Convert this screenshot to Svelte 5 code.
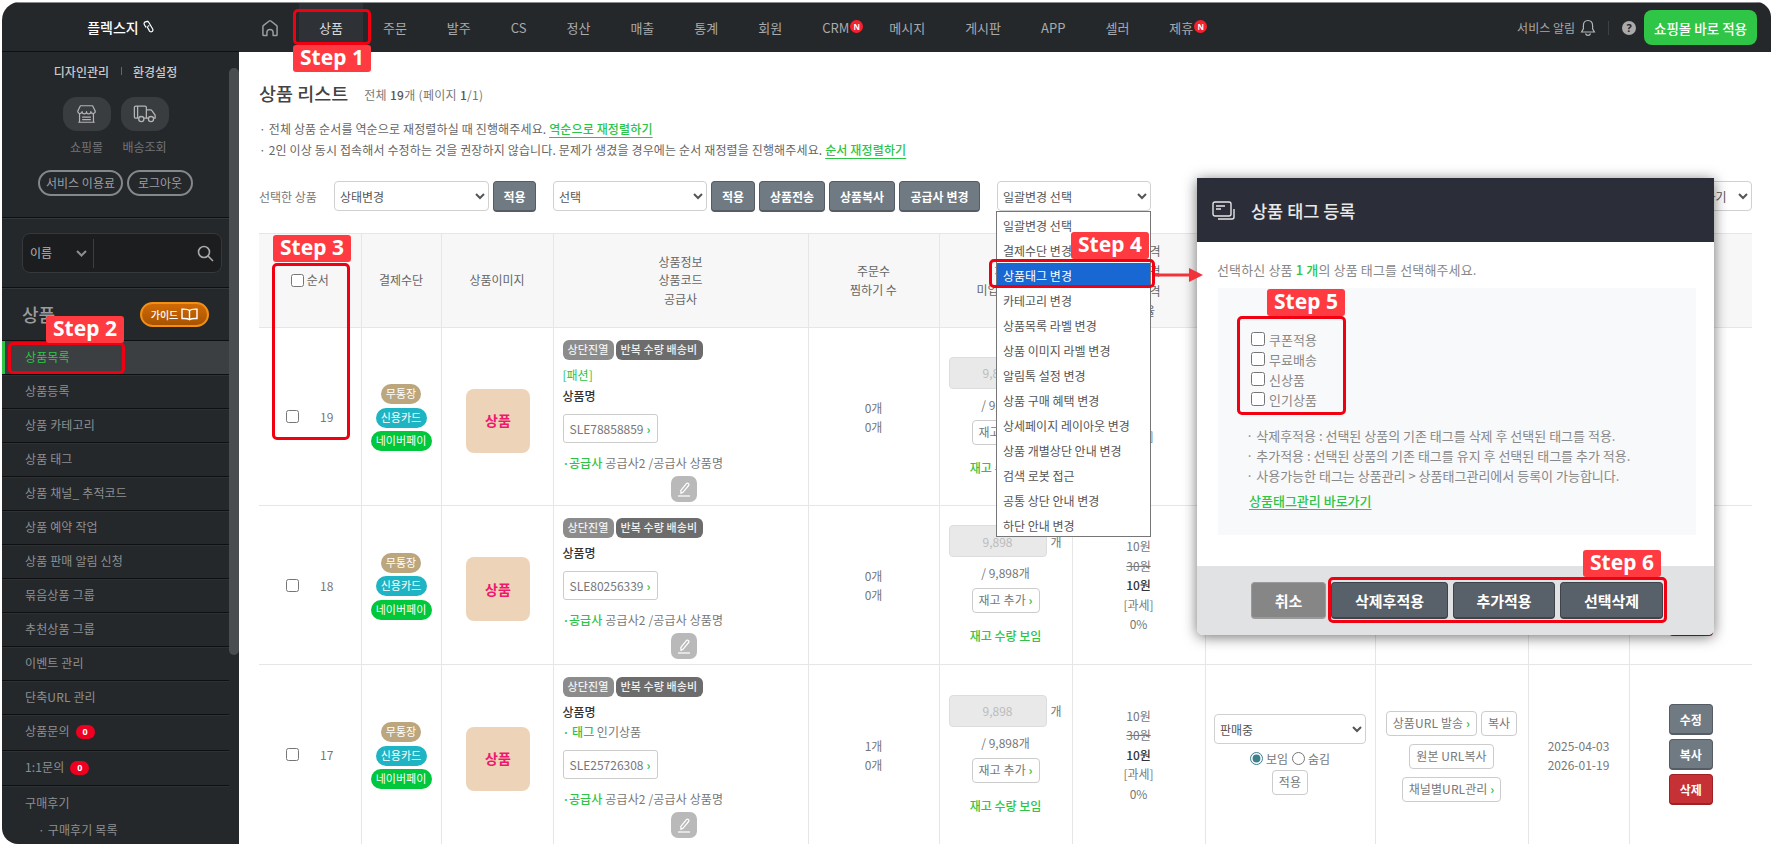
<script>
  const nav = [
    { t: '상품', active: true }, { t: '주문' }, { t: '발주' }, { t: 'CS' }, { t: '정산' }, { t: '매출' }, { t: '통계' },
    { t: '회원' }, { t: 'CRM', n: true }, { t: '메시지' }, { t: '게시판' }, { t: 'APP' }, { t: '셀러' }, { t: '제휴', n: true }
  ];
  const menu = [
    { t: '상품목록', active: true }, { t: '상품등록' }, { t: '상품 카테고리' }, { t: '상품 태그' }, { t: '상품 채널_ 추적코드' },
    { t: '상품 예약 작업' }, { t: '상품 판매 알림 신청' }, { t: '묶음상품 그룹' }, { t: '추천상품 그룹' }, { t: '이벤트 관리' },
    { t: '단축URL 관리' }, { t: '상품문의', badge: '0', tall: true }, { t: '1:1문의', badge: '0', tall: true }
  ];
  const rows = [
    { no: 19, h: 'r1', sku: 'SLE78858859', cat: '[패션]', orders: '0개', gap: 'g1' },
    { no: 18, h: 'r2', sku: 'SLE80256339', orders: '0개' },
    { no: 17, h: 'r3', sku: 'SLE25726308', tag: '인기상품', orders: '1개' }
  ];
  const drop = ['일괄변경 선택', '결제수단 변경', '상품태그 변경', '카테고리 변경', '상품목록 라벨 변경', '상품 이미지 라벨 변경', '알림톡 설정 변경', '상품 구매 혜택 변경', '상세페이지 레이아웃 변경', '상품 개별상단 안내 변경', '검색 로봇 접근', '공통 상단 안내 변경', '하단 안내 변경'];
  const tags = ['쿠폰적용', '무료배송', '신상품', '인기상품'];
  const steps = [1, 2, 3, 4, 5, 6];
</script>

<div class="root">
  <div class="frame">
    <header class="top">
      <div class="logo">
        <span>플렉스지</span>
        <svg width="11" height="14" viewBox="0 0 11 14" fill="none" stroke="#fff" stroke-width="1.2"><path d="M5.200 1.400 2.300 1.900a1.800 1.800 0 0 0-1 2.600l1.700 3"/><path d="M3.200 1.600a1.800 1.800 0 0 1 2.500.6l4 6.800a1.900 1.900 0 0 1-.7 2.600 1.900 1.900 0 0 1-2.600-.7L3.900 6.300"/><path d="M6.300 5.500 5 6.300"/></svg>
      </div>
      <svg class="home" width="20" height="20" viewBox="0 0 24 24" fill="none" stroke="#9a9c9e" stroke-width="1.8" stroke-linejoin="round"><path d="M3.500 20V10.500a2 2 0 0 1 .8-1.600L11 3.600a1.600 1.600 0 0 1 2 0l6.700 5.300a2 2 0 0 1 .8 1.600V20a1 1 0 0 1-1 1h-3.800v-3.500a3.700 3.700 0 0 0-7.400 0V21H4.500a1 1 0 0 1-1-1z"/></svg>
      <nav class="nav">
        {#each nav as n}
          <span class="nav-item" class:active={n.active}>{n.t}{#if n.n}<i class="n">N</i>{/if}</span>
        {/each}
      </nav>
      <div class="top-right">
        <span class="alarm">서비스 알림</span>
        <svg width="16" height="18" viewBox="0 0 16 18" fill="none" stroke="#b5b5b5" stroke-width="1.2"><path d="M8 1.500c-3 0-4.600 2.200-4.600 5v3.300L1.600 13h12.800l-1.800-3.200V6.500c0-2.800-1.600-5-4.600-5z"/><path d="M5.500 14.500a2.600 2.600 0 0 0 5 0"/></svg>
        <i class="vr"></i>
        <span class="q">?</span>
        <button class="go">쇼핑몰 바로 적용</button>
      </div>
    </header>

    <div class="body">
      <aside class="side">
        <div class="side-in">
          <section class="sec-a">
            <div class="links"><b>디자인관리</b><i></i><b>환경설정</b></div>
            <div class="quick">
              <div class="q-col">
                <span class="q-ico">
                  <svg width="21" height="20" viewBox="0 0 24 23" fill="none" stroke="#b3b3b3" stroke-width="1.4" stroke-linejoin="round"><path d="M5 2h14l3 6a2.500 2.500 0 0 1-5 .8 2.500 2.500 0 0 1-5 0 2.500 2.500 0 0 1-5 0 2.500 2.500 0 0 1-5-.8z"/><path d="M4 11v10h16V11M7 15h10M7 18h10M2.500 21h19"/></svg>
                </span>
                <em>쇼핑몰</em>
              </div>
              <div class="q-col">
                <span class="q-ico">
                  <svg width="24" height="18" viewBox="0 0 26 19" fill="none" stroke="#b3b3b3" stroke-width="1.4" stroke-linejoin="round"><path d="M6 14H3a1.500 1.500 0 0 1-1.500-1.500v-10A1.500 1.500 0 0 1 3 1h10a1.500 1.500 0 0 1 1.500 1.500V14H12M5 1v13"/><path d="M14.500 5h4.500a2 2 0 0 1 1.700 1l3 4.500a2 2 0 0 1 .3 1V14h-2M17 14h-2.500"/><circle cx="9" cy="15" r="2.800"/><circle cx="19.500" cy="15" r="2.800"/></svg>
                </span>
                <em>배송조회</em>
              </div>
            </div>
            <div class="pills"><span class="p1">서비스 이용료</span><span class="p2">로그아웃</span></div>
          </section>
          <section class="sec-b">
            <div class="search">
              <span class="s-name">이름</span>
              <svg class="s-chev" width="11" height="7" viewBox="0 0 11 7" fill="none" stroke="#8e8e8e" stroke-width="2"><path d="M1 1l4.500 4.500L10 1"/></svg>
              <i class="s-div"></i>
              <svg class="s-mag" width="17" height="17" viewBox="0 0 17 17" fill="none" stroke="#a9a9a9" stroke-width="1.600"><circle cx="7" cy="7" r="5.500"/><path d="M11 11l5 5"/></svg>
            </div>
          </section>
          <section class="sec-c">
            <h2>상품</h2>
            <span class="guide">가이드
              <svg width="17" height="13" viewBox="0 0 17 13" fill="none" stroke="#fff" stroke-width="1.400"><path d="M8.500 2.500C7 1.200 4.500 1 1 1.200v9.300c3.500-.2 6 0 7.500 1.200 1.500-1.200 4-1.400 7.500-1.200V1.200C12.500 1 10 1.200 8.500 2.500zM8.500 2.500v9.200"/></svg>
            </span>
          </section>
          <ul class="menu">
            {#each menu as m}
              <li class:active={m.active} class:tall={m.tall}>{m.t}{#if m.badge}<i class="cnt">{m.badge}</i>{/if}</li>
            {/each}
            <li class="last"><span>구매후기</span><small>· 구매후기 목록</small></li>
          </ul>
        </div>
        <div class="track"><i></i></div>
      </aside>

      <main class="main">
        <div class="title"><h1>상품 리스트</h1><span>전체 <b>19</b>개 (페이지 <b>1</b>/1)</span></div>
        <p class="note">· 전체 상품 순서를 역순으로 재정렬하실 때 진행해주세요. <a href="#a">역순으로 재정렬하기</a></p>
        <p class="note">· 2인 이상 동시 접속해서 수정하는 것을 권장하지 않습니다. 문제가 생겼을 경우에는 순서 재정렬을 진행해주세요. <a href="#a">순서 재정렬하기</a></p>

        <div class="tools">
          <span class="tl">선택한 상품</span>
          <select class="sel s155"><option>상태변경</option></select>
          <button class="gbtn w43">적용</button>
          <select class="sel s154 ml"><option>선택</option></select>
          <button class="gbtn w44">적용</button>
          <button class="gbtn w66">상품전송</button>
          <button class="gbtn w66">상품복사</button>
          <button class="gbtn w81">공급사 변경</button>
          <select class="sel s154 ml"><option>일괄변경 선택</option></select>
          <select class="sel s155 end"><option>엑셀 파일 다운로드 하기</option></select>
        </div>

        <table class="tbl">
          <colgroup>
            <col class="c1" /><col class="c2" /><col class="c3" /><col class="c4" /><col class="c5" /><col class="c6" /><col class="c6" /><col class="c8" /><col class="c9" /><col class="c10" /><col class="c11" />
          </colgroup>
          <thead>
            <tr>
              <th><label class="th-no"><input type="checkbox" />순서</label></th>
              <th>결제수단</th>
              <th>상품이미지</th>
              <th>상품정보<br />상품코드<br />공급사</th>
              <th>주문수<br />찜하기 수</th>
              <th>재고<br />미입금 재고</th>
              <th class="lh20">판매가격<br />정상가격<br />할인가격<br />과세율</th>
              <th>상태</th>
              <th>URL</th>
              <th>등록일<br />수정일</th>
              <th>관리</th>
            </tr>
          </thead>
          <tbody>
            {#each rows as r}
              <tr class={r.h}>
                <td><div class="no"><input type="checkbox" /><span>{r.no}</span></div></td>
                <td>
                  <div class="pays"><span class="pay a">무통장</span><span class="pay b">신용카드</span><span class="pay c">네이버페이</span></div>
                </td>
                <td><div class="thumb">상품</div></td>
                <td class="info">
                  <div class="chips"><span class="chip a">상단진열</span><span class="chip b">반복 수량 배송비</span></div>
                  {#if r.cat}<div class="ln cat">{r.cat}</div>{/if}
                  <div class="ln name">상품명</div>
                  {#if r.tag}<div class="ln tag"><b>· 태그</b> {r.tag}</div>{/if}
                  <span class="sku">{r.sku} <i>›</i></span>
                  <div class="ln sup"><b><i class="dot">·</i>공급사</b> 공급사2 /공급사 상품명</div>
                  <span class="edit">
                    <svg width="16" height="16" viewBox="0 0 16 16" fill="none" stroke="#fff" stroke-width="1.200"><path d="M5 12.300 4.800 9.500l5.600-6.800a1.400 1.400 0 0 1 2-.2 1.400 1.400 0 0 1 .2 2l-5.600 6.800z"/><path d="M2 15h12"/></svg>
                  </span>
                </td>
                <td class="ctr lines">{r.orders}<br />0개</td>
                <td>
                  <div class="stock">
                    <div class="st-in"><input disabled value="9,898" /><span>개</span></div>
                    <div class="st-t">/ 9,898개</div>
                    <span class="mini">재고 추가 <i>›</i></span>
                    <div class="st-g">재고 수량 보임</div>
                  </div>
                </td>
                <td class="ctr price">10원<br /><s>30원</s><br /><b>10원</b><br />[과세]<br />0%</td>
                <td>
                  <div class="status">
                    <select class="sel s152"><option>판매중</option></select>
                    <div class="radios">
                      <label><input type="radio" name={'v' + r.no} checked />보임</label>
                      <label><input type="radio" name={'v' + r.no} />숨김</label>
                    </div>
                    <span class="mini">적용</span>
                  </div>
                </td>
                <td>
                  <div class="urls">
                    <div><span class="mini">상품URL 발송 <i>›</i></span><span class="mini">복사</span></div>
                    <span class="mini">원본 URL복사</span>
                    <span class="mini">채널별URL관리 <i>›</i></span>
                  </div>
                </td>
                <td class="ctr lines">2025-04-03<br />2026-01-19</td>
                <td>
                  <div class="acts"><button class="gbtn">수정</button><button class="gbtn">복사</button><button class="gbtn del">삭제</button></div>
                </td>
              </tr>
            {/each}
          </tbody>
        </table>
      </main>
    </div>
  </div>

  <ul class="drop">
    {#each drop as d, i}
      <li class:sel-on={i === 2}>{d}</li>
    {/each}
  </ul>

  <section class="modal">
    <div class="m-head">
      <svg width="23" height="19" viewBox="0 0 23 19" fill="none" stroke="#e6e6e6" stroke-width="1.400"><rect x="1" y="1" width="18" height="14" rx="2"/><path d="M4 5h9M4 8h5"/><path d="M22 8v8a2 2 0 0 1-2 2H6"/></svg>
      <h3>상품 태그 등록</h3>
    </div>
    <div class="m-body">
      <p class="m-lead">선택하신 상품 <b>1 개</b>의 상품 태그를 선택해주세요.</p>
      <div class="m-panel">
        <div class="m-checks">
          {#each tags as t}
            <label><input type="checkbox" />{t}</label>
          {/each}
        </div>
        <ul class="m-notes">
          <li>· 삭제후적용 : 선택된 상품의 기존 태그를 삭제 후 선택된 태그를 적용.</li>
          <li>· 추가적용 : 선택된 상품의 기존 태그를 유지 후 선택된 태그를 추가 적용.</li>
          <li>· 사용가능한 태그는 상품관리 &gt; 상품태그관리에서 등록이 가능합니다.</li>
        </ul>
        <a class="m-link" href="#a">상품태그관리 바로가기</a>
      </div>
    </div>
    <div class="m-foot">
      <button class="mb cancel">취소</button>
      <button class="mb b1">삭제후적용</button>
      <button class="mb b2">추가적용</button>
      <button class="mb b3">선택삭제</button>
    </div>
  </section>

  <i class="box b-1"></i><i class="box b-2"></i><i class="box b-3"></i><i class="box b-4"></i><i class="box b-5"></i><i class="box b-6"></i>
  {#each steps as s}
    <span class={'step st' + s}>Step {s}</span>
  {/each}
  <svg class="arrow" width="48" height="16" viewBox="0 0 48 16"><path d="M0 6.500h34V1l14 7-14 7V9.500H0z" fill="#f2343a"/></svg>
</div>

<style>
  :global(body) { margin: 0; background: #fff; }
  * { box-sizing: border-box; }
  ul { list-style: none; margin: 0; padding: 0; }
  i, em { font-style: normal; }
  .root {
    position: relative; width: 1774px; height: 844px; overflow: hidden; background: #fff;
    font: 12px/19px "Noto Sans CJK KR", "Noto Sans", sans-serif; color: #777;
  }
  .frame {
    margin: 2px 3px 0 2px; height: 842px; display: flex; flex-direction: column; overflow: hidden;
    border-radius: 18px 15px 0 16px;
  }
  .top { height: 50px; flex: none; display: flex; align-items: center; background: #25282b; border-top: 1px solid #8a8c8e; }
  .logo {
    width: 237px; height: 49px; flex: none; display: flex; align-items: center; justify-content: center; gap: 4px;
    color: #fff; font-size: 14px; font-weight: 500; border-bottom: 1px solid #0e0f10;
  }
  .home { margin-left: 21px; flex: none; }
  .nav { display: flex; height: 49px; margin-left: 19px; }
  .nav-item { position: relative; display: flex; align-items: center; padding: 0 20px; font-size: 13px; color: #a9abad; }
  .nav-item.active { background: #2e3236; color: #ddd; }
  .n {
    position: absolute; left: calc(100% - 19px); top: 17px; width: 13px; height: 13px; border-radius: 50%; background: #f5222d;
    color: #fff; font: 700 8px/13px "Noto Sans", sans-serif; text-align: center;
  }
  .top-right { margin-left: auto; display: flex; align-items: center; padding-right: 14px; }
  .alarm { color: #a5a7a9; margin-right: 5px; }
  .vr { width: 1px; height: 14px; background: #3e4144; margin: 0 13px 0 12px; }
  .q {
    width: 14px; height: 14px; border-radius: 50%; background: #aaa; color: #25282b; font: 700 11px/14px "Noto Sans", sans-serif;
    text-align: center; margin-right: 8px;
  }
  .go {
    width: 113px; height: 35px; border: 0; border-radius: 8px; background: #2fc546; color: #fff; padding: 0;
    font: 500 13.5px "Noto Sans CJK KR", sans-serif;
  }
  .body { flex: 1; display: flex; min-height: 0; }
  .side { width: 237px; flex: none; display: flex; background: #25282b; overflow: hidden; }
  .side-in { width: 227px; flex: none; }
  .track { position: relative; width: 10px; flex: none; }
  .track i { position: absolute; left: 0; right: 0; top: 16px; height: 587px; background: #4a4d50; border-radius: 5px; }
  .sec-a { height: 165px; padding-top: 9px; }
  .links { display: flex; justify-content: center; align-items: center; height: 20px; color: #c9c9c9; }
  .links b { font-weight: 500; }
  .links i { width: 1px; height: 8px; background: #666; margin: 0 11px 0 12px; }
  .quick { display: flex; justify-content: center; gap: 10px; margin-top: 16px; }
  .q-col { width: 48px; display: flex; flex-direction: column; align-items: center; }
  .q-ico { width: 48px; height: 34px; border-radius: 14px; background: #3a3d40; display: flex; align-items: center; justify-content: center; }
  .q-col em { margin-top: 6px; color: #72757a; white-space: nowrap; }
  .pills { display: flex; justify-content: center; gap: 4px; margin-top: 14px; }
  .pills span { height: 26px; border: 2px solid #85888a; border-radius: 13px; color: #9d9fa1; line-height: 21px; text-align: center; }
  .p1 { width: 85px; } .p2 { width: 66px; }
  .sec-b { height: 70px; padding: 15px 0 0 20px; border-top: 1px solid #0e0f10; box-shadow: inset 0 1px #34373a; }
  .search { position: relative; width: 200px; height: 40px; background: #1b1d1f; border: 1px solid #36393c; border-radius: 8px; color: #b5b5b5; }
  .s-name { position: absolute; left: 7px; top: 9px; }
  .s-chev { position: absolute; left: 53px; top: 16px; }
  .s-div { position: absolute; left: 70px; top: 5px; width: 1px; height: 29px; background: #3c3f42; }
  .s-mag { position: absolute; left: 174px; top: 11px; }
  .sec-c { height: 53px; position: relative; border-top: 1px solid #0e0f10; box-shadow: inset 0 1px #34373a; }
  .sec-c h2 { margin: 0; position: absolute; left: 20px; top: 13px; font: 500 18px/26px "Noto Sans CJK KR", sans-serif; color: #9a9c9e; }
  .guide {
    position: absolute; left: 138px; top: 14px; width: 69px; height: 25px; border-radius: 13px; border: 2px solid #f39013;
    background: linear-gradient(#d06a06, #a85300); color: #fff; font-size: 10px; font-weight: 500; line-height: 20px;
    display: flex; align-items: center; justify-content: center; gap: 3px;
  }
  .menu li { position: relative; height: 34px; line-height: 32px; padding-left: 23px; color: #8d9092; letter-spacing: 0.14px; border-top: 1px solid #0e0f10; box-shadow: inset 0 1px #2e3134; }
  .menu li.tall { height: 35.5px; }
  .menu li.active { background: #3c3f42; color: #2fc546; box-shadow: inset 3px 0 #2fc546; }
  .cnt {
    display: inline-block; margin-left: 6px; width: 19px; height: 14px; border-radius: 7px; background: #f00020; color: #fff;
    font: 700 9px/14px "Noto Sans", sans-serif; text-align: center; vertical-align: 1px;
  }
  .menu li.last { height: 70px; padding-top: 1px; }
  .last span { display: block; }
  .last small { display: block; font-size: 12px; margin: -5px 0 0 13px; }

  .main { flex: 1; min-width: 0; padding: 28px 19px 0 20px; overflow: hidden; background: #fff; }
  .title { display: flex; align-items: center; height: 26px; gap: 16px; }
  .title h1 { margin: 0; font: 500 18.500px/26px "Noto Sans CJK KR", sans-serif; color: #444; }
  .title span { margin-top: 3px; color: #777; letter-spacing: 0.3px; }
  .title b { font-weight: 500; color: #555; }
  .note { margin: 0; height: 21px; line-height: 21px; color: #666; letter-spacing: 0.14px; }
  .note:first-of-type { margin-top: 12px; }
  .note a { color: #2dc447; font-weight: 500; text-decoration: underline; text-underline-offset: 3px; }

  .tools { display: flex; align-items: flex-start; margin-top: 21px; height: 31px; gap: 4px; }
  .tl { width: 71px; line-height: 31px; }
  .sel {
    height: 30px; background: #fff; border: 1px solid #d0d0d0; border-radius: 4px; color: #555; padding: 0 1px;
    font: 12px "Noto Sans CJK KR", sans-serif;
  }
  .s155 { width: 155px; } .s154 { width: 154px; } .s152 { width: 152px; }
  .ml { margin-left: 13px; }
  .end { margin-left: auto; padding-left: 6px; }
  .gbtn {
    height: 31px; padding: 0; border: 1px solid #555c63; border-bottom-width: 2px; border-radius: 4px; background: #6f7a83; color: #fff;
    font: 700 12px "Noto Sans CJK KR", sans-serif;
  }
  .w43 { width: 43px; } .w44 { width: 44px; } .w66 { width: 66px; } .w81 { width: 81px; }

  .tbl { margin-top: 21px; width: 1493px; table-layout: fixed; border-collapse: collapse; }
  .c1 { width: 102px; } .c2 { width: 80px; } .c3 { width: 112px; } .c4 { width: 255px; } .c5 { width: 131px; }
  .c6 { width: 133px; } .c8 { width: 170px; } .c9 { width: 153px; } .c10 { width: 101px; } .c11 { width: 123px; }
  .tbl th, .tbl td { border: 1px solid #e6e6e6; padding: 0; vertical-align: middle; }
  .tbl th:first-child, .tbl td:first-child { border-left: 0; }
  .tbl th:last-child, .tbl td:last-child { border-right: 0; }
  .tbl th { height: 94px; background: #f7f7f7; font-weight: 400; color: #666; text-align: center; line-height: 18.500px; }
  .tbl th.lh20 { line-height: 20px; }
  .th-no { display: flex; align-items: center; justify-content: center; gap: 3px; margin-right: 0; }
  input[type="checkbox"] { margin: 0; width: 13px; height: 13px; }
  .r1 { height: 178px; } .r2 { height: 159px; } .r3 { height: 180px; }
  .no { display: flex; align-items: center; padding-left: 27px; gap: 21px; }
  .pays { display: flex; flex-direction: column; align-items: center; gap: 3.500px; margin-top: 2px; }
  .pay { height: 20px; border-radius: 10px; color: #fff; font-size: 11px; line-height: 19px; padding: 0 5px; }
  .pay.a { background: #bba67d; width: 40px; padding: 0; text-align: center; }
  .pay.b { background: #1fb4c4; width: 51px; padding: 0; text-align: center; }
  .pay.c { background: #00c73c; width: 61px; padding: 0; text-align: center; }
  .thumb {
    width: 64px; height: 64px; margin: 8px auto 0; position: relative; left: 1px; border-radius: 8px; background: #edd3b7; color: #f0186d; font-size: 14px; font-weight: 700;
    display: flex; align-items: center; justify-content: center;
  }
  .tbl td.info { vertical-align: top; padding: 12px 4px 0 9px; }
  .chips { display: flex; gap: 2px; margin-bottom: 5px; }
  .chip { height: 20px; border-radius: 6px; color: #f0f0f0; font-size: 11px; line-height: 19px; padding: 0 5px; font-weight: 500; letter-spacing: 0.1px; white-space: nowrap; }
  .chip.a { background: #8c8c8c; width: 51px; }
  .chip.b { background: #6c6c6c; width: 87px; }
  .ln { height: 20px; line-height: 20px; white-space: nowrap; }
  .cat { color: #2dc447; margin-bottom: 1px; }
  .name { color: #333; font-weight: 500; }
  .tag { color: #777; margin-bottom: 3px; }
  .tag b, .sup b { color: #2dc447; font-weight: 500; }
  .dot { letter-spacing: -3.500px; margin-right: 3px; }
  .sku {
    display: flex; align-items: center; width: 95px; height: 29px; margin-top: 8px; padding-left: 6px; gap: 3px; border: 1px solid #ccc; border-radius: 3px; white-space: nowrap;
  }
  .sku i, .mini i { color: #2dc447; font-weight: 700; }
  .sup { margin-top: 10px; letter-spacing: 0.14px; }
  .edit {
    display: flex; align-items: center; justify-content: center; width: 26px; height: 26px; margin: 3px 0 0 108px; border-radius: 7px; background: #b9b9b9;
  }
  .ctr { text-align: center; }
  .lines { line-height: 19px; }
  .price { line-height: 19.500px; color: #777; }
  .price b { color: #333; font-weight: 500; }
  .price s { color: #777; }
  .stock { display: flex; flex-direction: column; align-items: center; }
  .st-in { align-self: flex-start; display: flex; align-items: center; gap: 4px; margin-left: 9px; }
  .st-in input {
    width: 98px; height: 32px; padding: 0; border: 1px solid #ddd; border-radius: 4px; background: #e9e9e9; color: #bbb; text-align: center;
    font: 12px "Noto Sans CJK KR", sans-serif;
  }
  .st-t { margin-top: 6px; }
  .mini {
    display: inline-block; height: 25px; line-height: 22px; padding: 0 6px; border: 1px solid #ccc; border-radius: 4px; white-space: nowrap; background: #fff; letter-spacing: 0.1px;
  }
  .stock .mini { margin-top: 6px; width: 68px; padding: 0; text-align: center; }
  .st-g { margin-top: 13px; color: #2dc447; font-weight: 500; }
  .status { display: flex; flex-direction: column; align-items: center; }
  .radios { display: flex; gap: 4px; margin-top: 5px; }
  .radios label { display: flex; align-items: center; gap: 3px; }
  .radios input { margin: 0; width: 13px; height: 13px; accent-color: #3d7f8b; }
  .status .mini { margin-top: 2px; }
  .urls { display: flex; flex-direction: column; align-items: center; gap: 8px; margin-top: 3px; }
  .urls div { display: flex; gap: 4px; }
  .acts { display: flex; flex-direction: column; align-items: center; gap: 4px; }
  .acts .gbtn { width: 44px; }
  .gbtn.del { background: #c63135; border-color: #9d2125; }

  .drop {
    position: absolute; left: 996px; top: 211px; width: 155px; height: 326px; background: #fff; border: 1px solid #767676; color: #555;
  }
  .drop li { height: 25px; line-height: 25px; padding-left: 6px; white-space: nowrap; }
  .drop li:first-child { margin-top: 1px; }
  .sel-on { background: #1967d2; color: #fff; }

  .modal {
    position: absolute; left: 1197px; top: 178px; width: 517px; height: 457px; display: flex; flex-direction: column; background: #fff;
    border-radius: 0 0 6px 6px; box-shadow: 0 2px 14px rgba(0, 0, 0, 0.55);
  }
  .m-head { height: 64px; flex: none; background: #2b2e38; display: flex; align-items: center; padding-left: 15px; gap: 16px; }
  .m-head h3 { margin: 0; font: 500 17.500px "Noto Sans CJK KR", sans-serif; color: #e8e8e8; }
  .m-body { flex: 1; padding: 18px 18px 0 21px; }
  .m-lead { margin: 0 0 8px -1px; height: 20px; line-height: 20px; color: #888; font-size: 13px; letter-spacing: 0.14px; white-space: nowrap; }
  .m-lead b { color: #2dc447; font-weight: 500; }
  .m-panel { height: 247px; background: #f8f9fa; padding: 41px 0 0 33px; color: #888; font-size: 13px; }
  .m-checks label { display: flex; align-items: center; gap: 4px; height: 20px; }
  .m-checks input[type="checkbox"] { width: 14px; height: 14px; }
  .m-notes { margin-top: 17px; margin-left: -5px; }
  .m-notes li { height: 20px; line-height: 20px; white-space: nowrap; }
  .m-link { display: inline-block; margin: 5px 0 0 -2px; color: #2dc447; font-weight: 500; text-decoration: underline; text-underline-offset: 3px; height: 20px; line-height: 20px; }
  .m-foot { height: 69px; flex: none; background: #e1e2e4; border-radius: 0 0 6px 6px; display: flex; padding: 16px 0 0 54px; gap: 5px; align-items: flex-start; }
  .mb {
    height: 37px; padding: 0; border: 1px solid #3f444a; border-bottom-width: 2px; border-radius: 4px; background: #58606a; color: #fff;
    font: 700 15px "Noto Sans CJK KR", sans-serif;
  }
  .cancel { width: 75px; background: #868686; border-color: #9a9a9a; }
  .b1 { width: 117px; } .b2 { width: 102px; } .b3 { width: 103px; }

  .box { position: absolute; border: 3px solid #f00010; border-radius: 5px; }
  .b-1 { left: 293px; top: 9px; width: 78px; height: 36px; }
  .b-2 { left: 8px; top: 342px; width: 117px; height: 32px; }
  .b-3 { left: 272px; top: 263px; width: 78px; height: 177px; }
  .b-4 { left: 989px; top: 259px; width: 166px; height: 29px; }
  .b-5 { left: 1237px; top: 316px; width: 109px; height: 99px; }
  .b-6 { left: 1328px; top: 577px; width: 339px; height: 46px; }
  .step {
    position: absolute; height: 27px; width: 78px; background: #ff3a40; border-radius: 3px; color: #fff; text-align: center;
    font: 700 21px/25px "Noto Sans", sans-serif; white-space: nowrap;
  }
  .st1 { left: 293px; top: 45px; }
  .st2 { left: 46px; top: 316px; }
  .st3 { left: 273px; top: 235px; }
  .st4 { left: 1071px; top: 232px; }
  .st5 { left: 1267px; top: 289px; }
  .st6 { left: 1583px; top: 550px; }
  .arrow { position: absolute; left: 1155px; top: 267px; }
</style>
